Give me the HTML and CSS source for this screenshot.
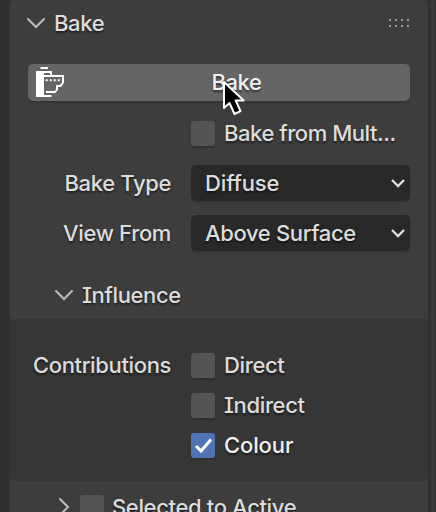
FILE: index.html
```html
<!DOCTYPE html>
<html lang="en">
<head>
<meta charset="utf-8">
<title>Bake</title>
<link rel="stylesheet" href="styles.css">
</head>
<body>
<div class="editor">
  <main class="panel">
    <header class="panel-head">
      <svg class="chevron" width="20" height="12" viewBox="0 0 20 12"><path d="M2 2l8 8 8-8"/></svg>
      <span class="title">Bake</span>
      <svg class="grip" width="22" height="10" viewBox="0 0 22 10"><path d="M1 1h2v2H1zM7 1h2v2H7zM13 1h2v2h-2zM19 1h2v2h-2zM1 7h2v2H1zM7 7h2v2H7zM13 7h2v2h-2zM19 7h2v2h-2z"/></svg>
    </header>
    <button class="bake-button" type="button">
      <svg class="bake-icon" width="30" height="33" viewBox="0 0 30 33">
        <path class="solid" d="M5.500 1h7.500v2H5.500zM1 5h8v26H1zM10.700 13.300h2v2h-2zM14.700 13.300h2v2h-2zM18.700 13.300h2v2h-2zM22.700 13.300h2v2h-2z"/>
        <path class="line" d="M2 6h14v4M9 10h19v6.500l-2.500 3.500h-3.500v3.500l-2 2.500h-9M2 30h14.500"/>
      </svg>
      <span class="bake-label">Bake</span>
      <svg class="cursor" width="28" height="38" viewBox="0 0 28 38"><path d="M2 2v26l5.500-5 5 11 6-2.800-4.800-10.700h8z"/></svg>
    </button>
    <div class="row"><span class="label"></span><i class="check"></i><span class="clipped">Bake from Mult...</span></div>
    <div class="row"><span class="label">Bake Type</span>
      <div class="select"><span class="open">Diffuse</span><svg width="16" height="12" viewBox="0 0 16 12"><path d="M2 3l6 6 6-6"/></svg></div></div>
    <div class="row"><span class="label">View From</span>
      <div class="select"><span>Above Surface</span><svg width="16" height="12" viewBox="0 0 16 12"><path d="M2 3l6 6 6-6"/></svg></div></div>
    <header class="sub-head">
      <svg class="chevron" width="20" height="12" viewBox="0 0 20 12"><path d="M2 2l8 8 8-8"/></svg>
      <span class="title">Influence</span>
    </header>
    <section class="influence">
      <div class="item"><span class="label">Contributions</span><i class="check"></i><span>Direct</span></div>
      <div class="item"><span class="label"></span><i class="check"></i><span>Indirect</span></div>
      <div class="item"><span class="label"></span><i class="check on"><svg width="24" height="24" viewBox="0 0 24 24"><path d="M5 13l5 5L20 6.500"/></svg></i><span class="bright open">Colour</span></div>
    </section>
    <header class="selected-head">
      <svg class="chevron" width="12" height="20" viewBox="0 0 12 20"><path d="M2 2l8 8-8 8"/></svg>
      <i class="check"></i><span>Selected to Active</span>
    </header>
  </main>
  <div class="scrollbar"></div>
</div>
</body>
</html>
```
FILE: styles.css
```css
* { box-sizing: border-box; }
body {
  margin: 0;
  height: 512px;
  overflow: hidden;
  background: #303030;
  color: #dcdcdc;
  font: 450 22px/30px Inter, sans-serif;
  font-feature-settings: "cv08" 1;
  letter-spacing: -0.36px;
  text-shadow: 0 2px 2px rgba(0, 0, 0, 0.5);
  white-space: nowrap;
}
.editor { display: flex; height: 512px; padding-left: 10px; overflow: hidden; }
.panel {
  width: 418px;
  height: 512px;
  flex: none;
  overflow: hidden;
  background: #3d3d3d;
  border-radius: 4px 4px 0 0;
}
.scrollbar { width: 4px; margin-left: 3px; background: #3b3b3b; }
svg { display: block; flex: none; }
.chevron { fill: none; stroke: #bdbdbd; stroke-width: 2; stroke-linecap: round; }
.panel-head { display: flex; align-items: center; height: 45px; padding: 0 18px 0 16px; }
.title { margin-left: 8px; }
.open { letter-spacing: -0.12px; }
.clipped { letter-spacing: -0.45px; }
.grip { margin-left: auto; fill: #999; }
.bake-button {
  position: relative;
  display: flex;
  align-items: center;
  width: 382px;
  height: 37px;
  margin: 19px 0 0 18px;
  padding: 0 0 0 7px;
  border: 0;
  border-radius: 5px;
  background: #656565;
  box-shadow: 0 2px 1px #343434;
  color: #f0f0f0;
  font: inherit;
  letter-spacing: inherit;
  font-feature-settings: inherit;
  text-shadow: inherit;
}
.solid { fill: #fff; }
.line { fill: none; stroke: #fff; stroke-width: 2; }
.bake-label { flex: 1; padding: 0 2px 2px 0; text-align: center; }
.cursor { position: absolute; left: 194px; top: 16px; fill: #000; stroke: #fff; stroke-width: 2; stroke-linejoin: round; }
.row { display: flex; align-items: center; height: 36px; margin-top: 14px; }
.label { width: 161px; margin-right: 20px; text-align: right; }
.check {
  width: 24px;
  height: 25px;
  margin-right: 9px;
  border-radius: 3px;
  background: #545454;
  box-shadow: 0 2px 1px #303030;
}
.check.on { background: #4f73b3; }
.check path { fill: none; stroke: #fff; stroke-width: 3; }
.select {
  display: flex;
  align-items: center;
  justify-content: space-between;
  width: 219px;
  height: 36px;
  padding: 0 4px 0 14px;
  border-radius: 5px;
  background: #282828;
  box-shadow: 0 2px 1px #373737;
}
.select path { fill: none; stroke: #e0e0e0; stroke-width: 2.3; }
.sub-head { display: flex; align-items: center; height: 48px; margin-top: 20px; padding-left: 44px; }
.influence { height: 162px; padding-top: 26px; border-radius: 0 0 5px 5px; background: #363636; }
.item { display: flex; align-items: center; height: 40px; }
.bright { color: #efefef; }
.selected-head { display: flex; align-items: center; height: 52px; padding-left: 48px; }
.selected-head .check { margin: 0 8px 0 10px; }
```
